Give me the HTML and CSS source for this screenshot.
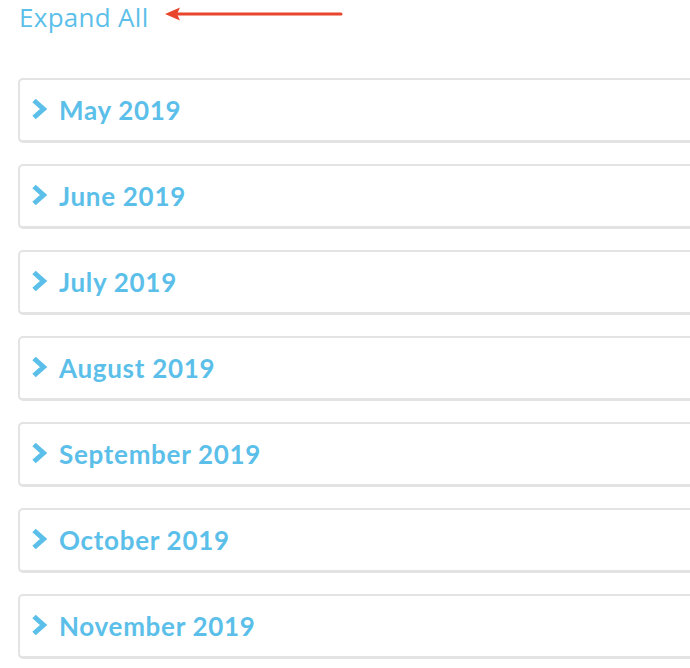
FILE: index.html
```html
<!DOCTYPE html>
<html lang="en">
<head>
    <meta charset="UTF-8">
    <meta name="viewport" content="width=device-width, initial-scale=1.0">
    <title>Archive</title>
    <link rel="stylesheet" href="styles.css">
</head>
<body>
    <div class="toolbar">
        <a href="#" class="expand-link">Expand All</a>
        <svg class="pointer" width="180" height="16" viewBox="0 0 180 16">
            <line x1="12" y1="8" x2="176" y2="8" stroke="#e8452c" stroke-width="3" stroke-linecap="round"/>
            <polygon points="0,8 15,1.5 12,8 15,14.5" fill="#e8452c"/>
        </svg>
    </div>

    <div class="months">
        <div class="month-panel"><svg class="chevron" viewBox="0 0 16 22"><polyline points="3,2.5 12.5,11 3,19.5"/></svg><span class="month-title">May 2019</span></div>
        <div class="month-panel"><svg class="chevron" viewBox="0 0 16 22"><polyline points="3,2.5 12.5,11 3,19.5"/></svg><span class="month-title">June 2019</span></div>
        <div class="month-panel"><svg class="chevron" viewBox="0 0 16 22"><polyline points="3,2.5 12.5,11 3,19.5"/></svg><span class="month-title">July 2019</span></div>
        <div class="month-panel"><svg class="chevron" viewBox="0 0 16 22"><polyline points="3,2.5 12.5,11 3,19.5"/></svg><span class="month-title">August 2019</span></div>
        <div class="month-panel"><svg class="chevron" viewBox="0 0 16 22"><polyline points="3,2.5 12.5,11 3,19.5"/></svg><span class="month-title">September 2019</span></div>
        <div class="month-panel"><svg class="chevron" viewBox="0 0 16 22"><polyline points="3,2.5 12.5,11 3,19.5"/></svg><span class="month-title">October 2019</span></div>
        <div class="month-panel"><svg class="chevron" viewBox="0 0 16 22"><polyline points="3,2.5 12.5,11 3,19.5"/></svg><span class="month-title">November 2019</span></div>
    </div>
</body>
</html>
```

FILE: styles.css
```css
body {
    margin: 0;
    padding: 0 0 0 18px;
    font-family: Lato, "Open Sans", sans-serif;
    background: #fff;
    overflow: hidden;
}
.toolbar {
    display: flex;
    align-items: center;
    height: 34px;
    gap: 16px;
}
.expand-link {
    color: #5cbfe9;
    font-family: "Open Sans", sans-serif;
    font-size: 26px;
    font-weight: 400;
    letter-spacing: 0.3px;
    line-height: 34px;
    text-decoration: none;
    padding-left: 1px;
}
.pointer {
    display: block;
    flex-shrink: 0;
    margin-top: -6px;
}
.months {
    display: flex;
    flex-direction: column;
    gap: 21px;
    margin-top: 44px;
}
.month-panel {
    display: flex;
    align-items: center;
    height: 60px;
    margin-right: -20px;
    border: 2px solid #e3e3e3;
    border-bottom-width: 3px;
    border-radius: 5px;
    padding-left: 11px;
}
.chevron {
    flex-shrink: 0;
    width: 16px;
    height: 22px;
    margin-right: 12px;
    margin-top: -3px;
    fill: none;
    stroke: #5cbfe9;
    stroke-width: 5;
}
.month-title {
    color: #5cbfe9;
    font-size: 26px;
    font-weight: 700;
    letter-spacing: 0.7px;
}
```
